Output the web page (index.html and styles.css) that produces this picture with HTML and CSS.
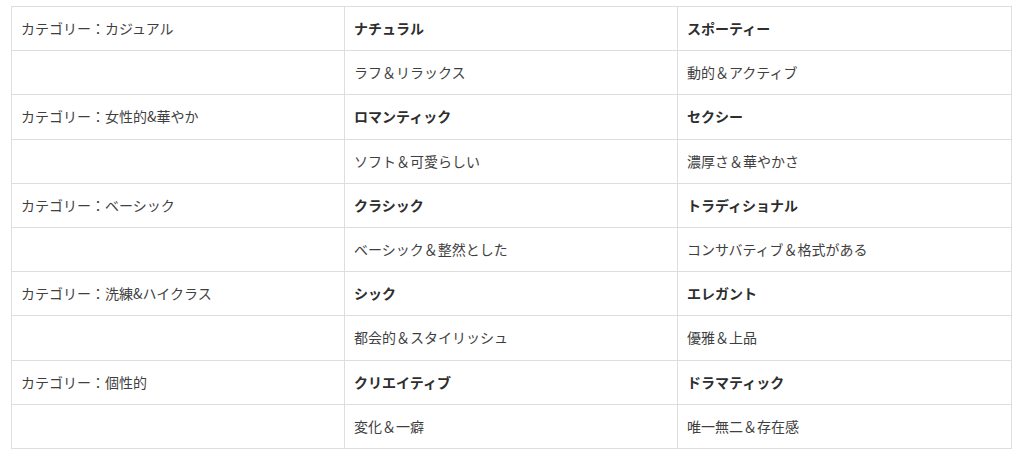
FILE: index.html
```html
<!DOCTYPE html>
<html lang="ja">
<head>
<meta charset="utf-8">
<link rel="stylesheet" href="styles.css">
</head>
<body>
<table class="styles">
  <colgroup><col class="c1"><col class="c2"><col class="c3"></colgroup>
  <tbody>
    <tr><td>カテゴリー：カジュアル</td><td class="b">ナチュラル</td><td class="b">スポーティー</td></tr>
    <tr><td></td><td>ラフ＆リラックス</td><td>動的＆アクティブ</td></tr>
    <tr><td>カテゴリー：女性的&amp;華やか</td><td class="b">ロマンティック</td><td class="b">セクシー</td></tr>
    <tr><td></td><td>ソフト＆可愛らしい</td><td>濃厚さ＆華やかさ</td></tr>
    <tr><td>カテゴリー：ベーシック</td><td class="b">クラシック</td><td class="b">トラディショナル</td></tr>
    <tr><td></td><td>ベーシック＆整然とした</td><td>コンサバティブ＆格式がある</td></tr>
    <tr><td>カテゴリー：洗練&amp;ハイクラス</td><td class="b">シック</td><td class="b">エレガント</td></tr>
    <tr><td></td><td>都会的＆スタイリッシュ</td><td>優雅＆上品</td></tr>
    <tr><td>カテゴリー：個性的</td><td class="b">クリエイティブ</td><td class="b">ドラマティック</td></tr>
    <tr><td></td><td>変化＆一癖</td><td>唯一無二＆存在感</td></tr>
  </tbody>
</table>
</body>
</html>
```
FILE: styles.css
```css
html, body {
  margin: 0;
  background: #ffffff;
}
body {
  padding: 6px 0 0 11px;
  font-family: "Noto Sans CJK JP", "Noto Sans", sans-serif;
  font-size: 14px;
  color: #3f3f3f;
}
.styles {
  border-collapse: collapse;
  table-layout: fixed;
  width: 1000px;
}
.c1 { width: 333px; }
.c2 { width: 333px; }
.c3 { width: 334px; }
.styles td {
  border: 1px solid #dedede;
  height: 44.2px;
  box-sizing: border-box;
  padding: 0 9px 1px 9px;
  vertical-align: middle;
  line-height: 20px;
}
.styles td.b {
  font-weight: 700;
  color: #2e2e2e;
}
```
